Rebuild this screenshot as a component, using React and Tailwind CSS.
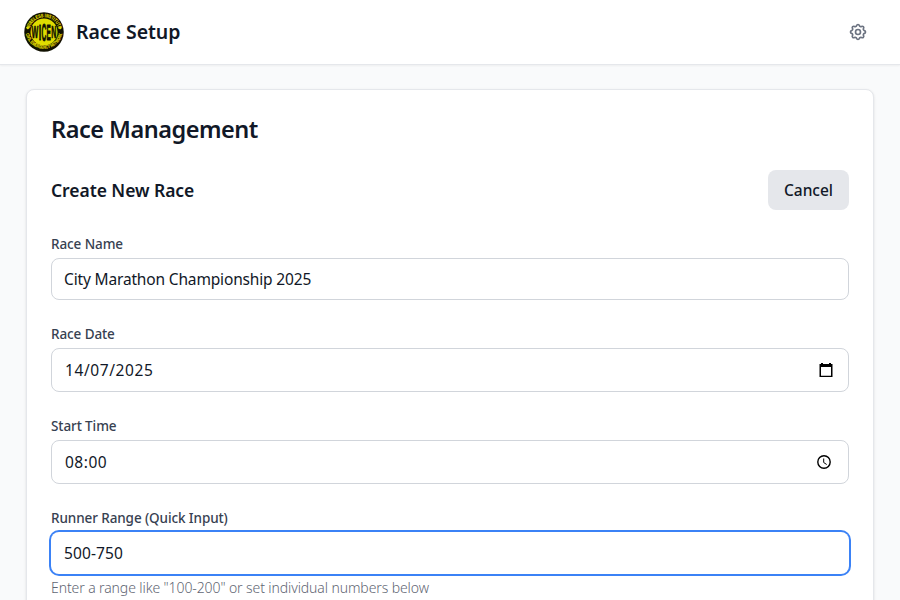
import { HiOutlineCog } from "react-icons/hi";

function Logo() {
  return (
    <svg viewBox="0 0 80 80" className="h-10 w-10" fontFamily="Liberation Sans, sans-serif" fontWeight="700">
      <defs>
        <path id="logo-top" d="M10.5 40a29.5 29.5 0 0 1 59 0" />
        <path id="logo-bottom" d="M3 34a37 37 0 0 0 74 0" transform="translate(0 2.500)" />
      </defs>
      <circle cx="40" cy="40" r="39.5" fill="#111100" />
      <circle cx="40" cy="40" r="27" fill="#e0dc00" />
      <g fill="#e0dc00" stroke="#e0dc00" strokeWidth=".3">
        <text fontSize="10">
          <textPath href="#logo-top" startOffset="50%" textAnchor="middle" textLength="80" lengthAdjust="spacingAndGlyphs">WIRELESS INSTITUTE</textPath>
        </text>
        <text fontSize="9.5">
          <textPath href="#logo-bottom" startOffset="50%" textAnchor="middle" textLength="102" lengthAdjust="spacingAndGlyphs">CIVIL EMERGENCY NETWORK</textPath>
        </text>
      </g>
      <circle cx="7.500" cy="32" r="2.500" fill="#e0dc00" />
      <circle cx="72.500" cy="32" r="2.500" fill="#e0dc00" />
      <g fill="#111100" stroke="#111100" strokeWidth=".7" textAnchor="middle">
        <text transform="translate(22 51) scale(.72 1.600)" fontSize="20">W</text>
        <text transform="translate(32 55) scale(.9 2.150)" fontSize="20">I</text>
        <text transform="translate(40 57) scale(.66 2.400)" fontSize="20">C</text>
        <text transform="translate(49.500 55) scale(.64 2.150)" fontSize="20">E</text>
        <text transform="translate(59.500 51) scale(.7 1.600)" fontSize="20">N</text>
      </g>
    </svg>
  );
}

function CalendarIcon() {
  return (
    <svg viewBox="0 0 16 16" className="h-4 w-4" fill="#000">
      <path d="M3 1h2v1h6V1h2v1h1.500v13h-13V2H3zM3 5v8.700h10V5z" fillRule="evenodd" />
    </svg>
  );
}

function ClockIcon() {
  return (
    <svg viewBox="0 0 16 16" className="h-4 w-4" fill="none" stroke="#000">
      <circle cx="8" cy="8" r="6.200" strokeWidth="1.400" />
      <path d="M7.700 4.500v4l3 2" strokeWidth="1" />
    </svg>
  );
}

function Field({ label, children }) {
  return (
    <div>
      <div className="mb-1 h-5 text-[13.5px] leading-5 font-medium tracking-[-0.1px] text-[#374151]">{label}</div>
      {children}
    </div>
  );
}

export default function App() {
  return (
    <div className="h-[600px] overflow-hidden bg-[#f9fafb] font-['Noto_Sans',sans-serif] whitespace-nowrap text-[#111827]">
      <header className="flex h-[65px] items-center justify-between border-b border-[#e5e7eb] bg-white px-6 shadow-xs">
        <div className="flex items-center gap-3">
          <Logo />
          <h1 className="text-[19.5px] leading-7 font-semibold tracking-[-0.05px]">Race Setup</h1>
        </div>
        <button className="p-2 text-[#6b7280]"><HiOutlineCog className="h-5 w-5" /></button>
      </header>
      <main className="mx-auto max-w-4xl px-6 pt-6">
        <section className="h-[620px] rounded-lg border border-[#e5e7eb] bg-white px-6 pt-[23px] shadow-sm">
          <h2 className="mb-[25px] text-[23.5px] leading-8 font-semibold tracking-[-0.48px]">Race Management</h2>
          <div className="mb-6 flex h-10 items-center justify-between">
            <h3 className="text-[17.5px] leading-7 font-semibold tracking-[-0.06px]">Create New Race</h3>
            <button className="h-10 w-[81px] rounded-lg bg-[#e5e7eb] pt-0.5 text-[15.5px] font-medium">Cancel</button>
          </div>
          <div className="flex flex-col gap-6">
            <Field label="Race Name">
              <div className="flex h-[42px] items-center rounded-lg border border-[#d1d5db] px-3 pt-0.5 text-[15.5px] tracking-[-0.16px]">City Marathon Championship 2025</div>
            </Field>
            <Field label="Race Date">
              <div className="flex h-11 items-center justify-between rounded-lg border border-[#d1d5db] pr-3.5 pl-[13px] text-[15.5px] tracking-[0.6px]">
                <span className="pt-0.5">14/07/2025</span><CalendarIcon />
              </div>
            </Field>
            <Field label="Start Time">
              <div className="flex h-11 items-center justify-between rounded-lg border border-[#d1d5db] pr-4 pl-[13px] text-[15.5px] tracking-[0.5px]">
                <span className="pt-0.5">08:00</span><ClockIcon />
              </div>
            </Field>
            <Field label="Runner Range (Quick Input)">
              <div className="flex h-[42px] items-center rounded-lg border border-transparent px-3 pt-0.5 text-[15.5px] tracking-[0.1px] ring-2 ring-[#3b82f6]">500-750</div>
              <p className="mt-1 text-[14px] leading-5 font-light tracking-[-0.1px] text-[#5f6673]">Enter a range like "100-200" or set individual numbers below</p>
            </Field>
          </div>
        </section>
      </main>
    </div>
  );
}
